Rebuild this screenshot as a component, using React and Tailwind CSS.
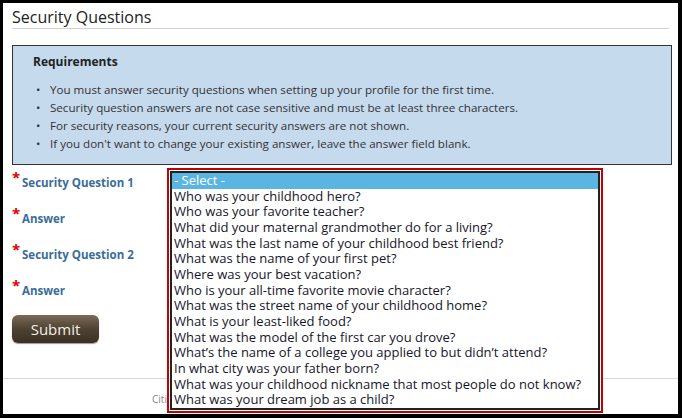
const requirements = [
  'You must answer security questions when setting up your profile for the first time.',
  'Security question answers are not case sensitive and must be at least three characters.',
  'For security reasons, your current security answers are not shown.',
  "If you don't want to change your existing answer, leave the answer field blank.",
];

const questions = [
  'Who was your childhood hero?',
  'Who was your favorite teacher?',
  'What did your maternal grandmother do for a living?',
  'What was the last name of your childhood best friend?',
  'What was the name of your first pet?',
  'Where was your best vacation?',
  'Who is your all-time favorite movie character?',
  'What was the street name of your childhood home?',
  'What is your least-liked food?',
  'What was the model of the first car you drove?',
  'What’s the name of a college you applied to but didn’t attend?',
  'In what city was your father born?',
  'What was your childhood nickname that most people do not know?',
  'What was your dream job as a child?',
];

const labels = ['Security Question 1', 'Answer', 'Security Question 2', 'Answer'];

function FieldLabel({ text }) {
  return (
    <div className="h-[36px] flex items-center">
      <span className="w-[10px] self-start mt-[6px] text-[15px] leading-[12px] font-bold text-[#e00000]">*</span>
      <span className="text-[11.5px] font-bold text-[#3a6c9c]">{text}</span>
    </div>
  );
}

export default function App() {
  return (
    <div className="w-[682px] h-[418px] bg-black pt-[3px] pl-[3px] font-['Open_Sans',sans-serif]">
      <div className="relative w-[675px] h-[411px] bg-white overflow-hidden">
        <div className="mx-[9px] h-[26px] border-b border-[#d2d2d2] text-[16px] leading-[28px] text-[#222]">
          Security Questions
        </div>

        <div className="mx-[9px] mt-[16px] w-[660px] h-[120px] border border-[#333] bg-[#c6daee] pl-[20px] pt-[7px] text-[#333]">
          <div className="text-[12px] leading-[18px] font-bold text-[#222]">Requirements</div>
          <ul className="mt-[10px]">
            {requirements.map(r => (
              <li key={r} className="flex text-[11.6px] leading-[18px]">
                <span className="w-[17px] pl-[3px]">•</span>
                <span>{r}</span>
              </li>
            ))}
          </ul>
        </div>

        <div className="mx-[9px]">
          {labels.map((l, i) => (
            <FieldLabel key={i} text={l} />
          ))}
          <button className="mt-[6px] w-[87px] h-[28px] rounded-[6px] bg-gradient-to-b from-[#7a6b56] via-[#4e4232] to-[#3a3024] text-[#f3efe6] text-[15px] leading-[28px] shadow-[0_1px_1px_rgba(0,0,0,0.4)]">
            Submit
          </button>
        </div>

        <div className="mt-[35px] border-t border-[#d8d8d8] pl-[149px] pt-[13px] text-[10px] text-[#888]">
          Citizens Online Services
        </div>

        <div className="absolute left-[164px] top-[165px] w-[436px] h-[245px] border-2 border-[#c40000] bg-white p-[1px]">
          <div className="h-full border-2 border-[#222] bg-white text-[13px] leading-[15.65px] text-[#16162a]">
            <div className="bg-[#5bb5e1] text-white pl-[2px]">- Select -</div>
            {questions.map(q => (
              <div key={q} className="pl-[2px] whitespace-nowrap">{q}</div>
            ))}
          </div>
        </div>
      </div>
    </div>
  );
}
